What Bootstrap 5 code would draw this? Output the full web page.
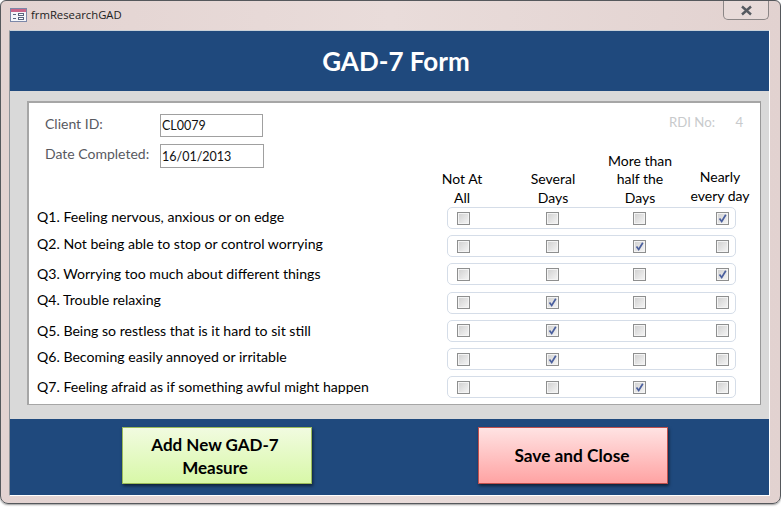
<!DOCTYPE html>
<html lang="en">
<head>
    <meta charset="UTF-8">
    <meta name="viewport" content="width=device-width, initial-scale=1.0">
    <title>frmResearchGAD</title>
    <link href="https://cdn.jsdelivr.net/npm/bootstrap@5.3.0/dist/css/bootstrap.min.css" rel="stylesheet">
    <style>
        html, body { height: 507px; overflow: hidden; background: #fff; }
        body { font-family: Lato, "Liberation Sans", sans-serif; color: #000; }
        .app-window { width: 781px; height: 504px; border: 1px solid #55585c; border-radius: 6px 6px 8px 8px; background: linear-gradient(90deg, #e3d3d1, #e9dcda 50%, #e2d2d0); box-shadow: 0 1px 2px #999; padding: 0 10px 7px 8px; }
        .title-bar { height: 29px; padding-left: 1px; }
        .title-text { font-family: "Open Sans", sans-serif; font-size: 11.3px; color: #222; margin-left: 4px; margin-top: -1px; }
        .title-icon { margin-top: -1px; }
        .close-btn { width: 46px; height: 19px; border: 1px solid #8b8686; border-top: 0; border-radius: 0 0 5px 5px; background: rgba(255,255,255,.18); margin-right: 1px; }
        .form-area { flex: 1; border: 1px solid #fff; border-left-color: #8f9499; border-top-color: #c8d0d8; min-height: 0; }
        .band { background: #1f497d; color: #fff; }
        .band-top { height: 60px; font-size: 26px; font-weight: 700; padding-left: 13px; }
        .band-bottom { height: 76px; padding: 8px 0 0 112px; gap: 166px; }
        .mid-area { flex: 1; background: #d9d9d9; padding: 10px 8px 14px 17px; min-height: 0; }
        .white-panel { height: 304px; background: #fff; border: 2px solid #a6a6a6; border-right-width: 1px; border-bottom-width: 1px; padding: 11px 0 0 8px; border-right-color: #999; }
        .head-left { width: 381px; }
        .field-line { height: 30px; }
        .field-label { width: 123px; padding-left: 8px; font-size: 14px; color: #58595f; margin-top: -1px; }
        .field-box.form-control { width: 104px; height: 24px; min-height: 0; border: 1px solid #a0a0a0; font-size: 12.5px; padding: 0 0 0 1px; line-height: 22px; color: #111; font-family: inherit; border-radius: 0; }
        .field-line-first .field-box.form-control { width: 103px; height: 23px; }
        .rdi-line { height: 24px; margin-top: -1px; color: #c8cacc; font-size: 13.2px; padding-left: 251px; }
        .rdi-num { margin-left: 17px; }
        .head-cols { height: 54px; margin-top: 16px; font-size: 14px; line-height: 18.5px; text-align: center; color: #000; }
        .head-col-a { width: 88px; }
        .head-col-b { width: 94px; }
        .head-col-c { width: 80px; }
        .head-col-d { width: 80px; padding-bottom: 2px; }
        .q-list { margin-top: -3px; }
        .q-row { height: 28.2px; }
        .q-text { width: 410px; font-size: 14.1px; }
        .lift-a .q-text { margin-bottom: 1px; }
        .lift-b .q-text { margin-bottom: 3px; }
        .lift-c .q-text { margin-bottom: 5px; }
        .lift-d .q-text { margin-bottom: 7px; }
        .tick-pill { width: 289px; height: 22px; border: 1px solid #d5dde8; border-radius: 5px; display: grid; grid-template-columns: 89px 87px 83px 13px; padding-left: 9px; align-items: center; }
        .tick-box.form-check-input { width: 13px; height: 13px; margin: 0; border: 1px solid #8e8f8f; border-radius: 0; background-color: #e4e4e4; background-image: linear-gradient(135deg, #cfcfcf, #f6f6f6); box-shadow: inset 0 0 0 1px #f4f4f4; opacity: 1; }
        .tick-box.form-check-input:checked { border-color: #8e8f8f; background-color: #e4e4e4; background-repeat: no-repeat; background-position: center; background-image: url("data:image/svg+xml,%3Csvg xmlns='http://www.w3.org/2000/svg' viewBox='0 0 11 11'%3E%3Cpath d='M2.5 5.5l2.2 3L8.8 1.8' fill='none' stroke='%234a5f9e' stroke-width='1.7'/%3E%3C/svg%3E"), linear-gradient(135deg, #cfcfcf, #f6f6f6); background-size: 11px 11px, auto; }
        .act-btn { width: 190px; height: 57px; border-radius: 0; font-size: 17.3px; font-weight: 700; line-height: 23px; color: #000; box-shadow: 1px 2px 3px rgba(0,0,0,.55); padding: 0 20px; font-family: inherit; }
        .act-green { background: linear-gradient(#f1fbe0, #d8f8a8); border: 1px solid #9bbb59; font-size: 17px; padding: 0 22px 0 18px; }
        .act-red { background: linear-gradient(#ffe3e3, #ffa3a3); border: 1px solid #c0504d; padding: 0 21px 0 19px; }
    </style>
</head>
<body>

<div class="app-window d-flex flex-column">
    <!-- Title bar -->
    <div class="title-bar d-flex align-items-center">
        <svg class="title-icon" width="17" height="14" viewBox="0 0 17 14">
            <rect x=".5" y=".5" width="16" height="13" fill="#f4f6fa" stroke="#7c87a8"/>
            <rect x="1" y="1" width="15" height="3" fill="#c9658a"/>
            <path d="M3 6.5h3M3 10.5h3" stroke="#59657f"/>
            <rect x="8.5" y="5.5" width="5" height="2" fill="#fff" stroke="#59657f"/>
            <rect x="8.5" y="9.5" width="5" height="2" fill="#fff" stroke="#59657f"/>
        </svg>
        <span class="title-text">frmResearchGAD</span>
        <div class="close-btn ms-auto align-self-start d-flex align-items-center justify-content-center">
            <svg width="13" height="11" viewBox="0 0 13 11"><path d="M2 1.5l9 8M11 1.5l-9 8" stroke="#555a60" stroke-width="2.4"/></svg>
        </div>
    </div>

    <div class="form-area d-flex flex-column">
        <div class="band band-top d-flex align-items-center justify-content-center">GAD-7 Form</div>

        <div class="mid-area">
            <div class="white-panel">
                <div class="d-flex">
                    <div class="head-left">
                        <div class="field-line field-line-first d-flex align-items-start">
                            <span class="field-label">Client ID:</span>
                            <input class="field-box form-control" type="text" value="CL0079" readonly>
                        </div>
                        <div class="field-line d-flex align-items-start">
                            <span class="field-label">Date Completed:</span>
                            <input class="field-box form-control" type="text" value="16/01/2013" readonly>
                        </div>
                    </div>
                    <div>
                        <div class="rdi-line">RDI No: <span class="rdi-num">4</span></div>
                        <div class="head-cols d-flex align-items-end">
                            <div class="head-col-a">Not At<br>All</div>
                            <div class="head-col-b">Several<br>Days</div>
                            <div class="head-col-c">More than<br>half the<br>Days</div>
                            <div class="head-col-d">Nearly<br>every day</div>
                        </div>
                    </div>
                </div>

                <div id="questions" class="q-list"></div>
            </div>
        </div>

        <div class="band band-bottom d-flex align-items-start">
            <button class="btn act-btn act-green" type="button">Add New GAD-7 Measure</button>
            <button class="btn act-btn act-red" type="button">Save and Close</button>
        </div>
    </div>
</div>

<script>
// text, which column is ticked, row class for the uneven label offsets
const questions = [
    ['Q1. Feeling nervous, anxious or on edge', 3, 'lift-b'],
    ['Q2. Not being able to stop or control worrying', 2, 'lift-c'],
    ['Q3. Worrying too much about different things', 3, 'lift-a'],
    ['Q4. Trouble relaxing', 1, 'lift-d'],
    ['Q5. Being so restless that is it hard to sit still', 1, 'lift-a'],
    ['Q6. Becoming easily annoyed or irritable', 1, 'lift-c'],
    ['Q7. Feeling afraid as if something awful might happen', 2, 'lift-a']
];

document.getElementById('questions').innerHTML = questions.map(q => {
    let boxes = '';
    for (let i = 0; i < 4; i++) {
        boxes += `<input class="form-check-input tick-box" type="checkbox" ${i === q[1] ? 'checked' : ''}>`;
    }
    return `<div class="q-row d-flex align-items-center ${q[2]}">
        <div class="q-text">${q[0]}</div>
        <div class="tick-pill">${boxes}</div>
    </div>`;
}).join('');
</script>

<script src="https://cdn.jsdelivr.net/npm/bootstrap@5.3.0/dist/js/bootstrap.bundle.min.js"></script>
</body>
</html>
